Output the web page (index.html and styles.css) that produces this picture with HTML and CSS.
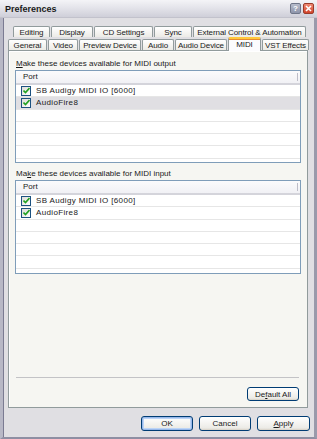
FILE: index.html
```html
<!DOCTYPE html>
<html>
<head>
<meta charset="utf-8">
<link rel="stylesheet" href="styles.css">
</head>
<body>
<div class="window">
  <div class="titlebar">
    <span class="title">Preferences</span>
    <div class="tb-buttons">
      <span class="tb-btn help">?</span>
      <span class="tb-btn close">
        <svg width="7" height="7" viewBox="0 0 7 7"><path d="M1 1L6 6M6 1L1 6" stroke="#fff" stroke-width="1.6"/></svg>
      </span>
    </div>
  </div>
  <div class="frame">
    <div class="tabs">
      <div class="tabrow row1">
        <span class="tab w-editing">Editing</span>
        <span class="tab w-display">Display</span>
        <span class="tab w-cd">CD Settings</span>
        <span class="tab w-sync">Sync</span>
        <span class="tab w-ext">External Control &amp; Automation</span>
      </div>
      <div class="tabrow row2">
        <span class="tab w-general">General</span>
        <span class="tab w-video">Video</span>
        <span class="tab w-preview">Preview Device</span>
        <span class="tab w-audio">Audio</span>
        <span class="tab w-adev">Audio Device</span>
        <span class="tab w-midi active">MIDI</span>
        <span class="tab w-vst">VST Effects</span>
      </div>
    </div>
    <div class="panel">
      <div class="label"><u>M</u>ake these devices available for MIDI output</div>
      <div class="list list-out">
        <div class="lhead"><span>Port</span><i class="hsep"></i></div>
        <div class="row"><span class="cb"><svg width="7" height="7" viewBox="0 0 7 7"><path d="M0.5 3.5L2.5 5.5L6.5 1" fill="none" stroke="#21a121" stroke-width="1.6"/></svg></span><span class="rt">SB Audigy MIDI IO [6000]</span></div>
        <div class="row sel"><span class="cb"><svg width="7" height="7" viewBox="0 0 7 7"><path d="M0.5 3.5L2.5 5.5L6.5 1" fill="none" stroke="#21a121" stroke-width="1.6"/></svg></span><span class="rt">AudioFire8</span></div>
        <div class="row"></div>
        <div class="row"></div>
        <div class="row"></div>
        <div class="row"></div>
      </div>
      <div class="label l2">Ma<u>k</u>e these devices available for MIDI input</div>
      <div class="list list-in">
        <div class="lhead"><span>Port</span><i class="hsep"></i></div>
        <div class="row"><span class="cb"><svg width="7" height="7" viewBox="0 0 7 7"><path d="M0.5 3.5L2.5 5.5L6.5 1" fill="none" stroke="#21a121" stroke-width="1.6"/></svg></span><span class="rt">SB Audigy MIDI IO [6000]</span></div>
        <div class="row"><span class="cb"><svg width="7" height="7" viewBox="0 0 7 7"><path d="M0.5 3.5L2.5 5.5L6.5 1" fill="none" stroke="#21a121" stroke-width="1.6"/></svg></span><span class="rt">AudioFire8</span></div>
        <div class="row"></div>
        <div class="row"></div>
        <div class="row"></div>
        <div class="row"></div>
        <div class="row"></div>
      </div>
      <div class="spacer"></div>
      <div class="sep"></div>
      <div class="defrow"><span class="btn w-def">De<u>f</u>ault All</span></div>
    </div>
    <div class="buttons">
      <span class="btn default w-ok">OK</span>
      <span class="btn w-cancel">Cancel</span>
      <span class="btn w-apply"><u>A</u>pply</span>
    </div>
  </div>
</div>
</body>
</html>
```
FILE: styles.css
```css
html, body {
  margin: 0;
  padding: 0;
  background: #e0dfe3;
}
body {
  font-family: "Liberation Sans", Arial, sans-serif;
  font-size: 8px;
  color: #1a1a1a;
}
.window {
  width: 317px;
  height: 439px;
  display: flex;
  flex-direction: column;
  box-sizing: border-box;
}
.titlebar {
  height: 18px;
  flex: none;
  display: flex;
  align-items: center;
  justify-content: space-between;
  padding: 0 3px 0 5px;
  background: linear-gradient(#f4f4f7 0%, #e6e6ec 40%, #cfcfd9 100%);
  border-bottom: 1px solid #c2c2cc;
  box-sizing: border-box;
}
.title {
  font-weight: bold;
  font-size: 9px;
  color: #1a1a1a;
}
.tb-buttons {
  display: flex;
  gap: 2px;
}
.tb-btn {
  width: 11px;
  height: 11px;
  border-radius: 2px;
  box-sizing: border-box;
  display: flex;
  align-items: center;
  justify-content: center;
  font-weight: bold;
  font-size: 8px;
  color: #fff;
}
.help {
  background: linear-gradient(#b7bccb, #8e95ab);
  border: 1px solid #6f7689;
}
.close {
  background: linear-gradient(#f08a73, #d1432b);
  border: 1px solid #9b3b2a;
}
.frame {
  flex: 1;
  display: flex;
  flex-direction: column;
  border-left: 3px solid #b8b8c6;
  border-right: 3px solid #9a9aab;
  border-bottom: 2px solid #8f8fa3;
  box-shadow: inset 1px 0 0 #7b7b92;
  padding: 7px 4px 0 5px;
  background: #e0dfe3;
}
.tabs {
  display: flex;
  flex-direction: column;
  height: 25px;
  flex: none;
}
.tabrow {
  display: flex;
  align-items: flex-end;
  height: 12px;
}
.row1 { padding-left: 5px; height: 12px; }
.row2 { height: 13px; }
.tab {
  height: 11px;
  box-sizing: border-box;
  border: 1px solid #919b9c;
  border-bottom: none;
  border-radius: 2px 2px 0 0;
  background: linear-gradient(#ffffff, #ecebe6);
  display: flex;
  align-items: center;
  justify-content: center;
  margin-right: 1px;
  white-space: nowrap;
  font-size: 8px;
  letter-spacing: -0.1px;
}
.tab.active {
  height: 14px;
  background: #fcfcfe;
  border-top: 2px solid #ffc83c;
  box-shadow: inset 0 1px 0 #e68b2c;
  align-items: flex-start;
  padding-top: 1px;
  position: relative;
  z-index: 2;
  margin-bottom: -1px;
}
.w-editing { width: 37px; }
.w-display { width: 42px; }
.w-cd { width: 59px; }
.w-sync { width: 38px; }
.w-ext { width: 113px; }
.w-general { width: 39px; }
.w-video { width: 30px; }
.w-preview { width: 62px; }
.w-audio { width: 32px; }
.w-adev { width: 52px; }
.w-midi { width: 33px; }
.w-vst { width: 47px; }
.panel {
  height: 358px;
  flex: none;
  box-sizing: border-box;
  border: 1px solid #919b9c;
  background: #f6f6f2;
  box-shadow: inset 1px 1px 0 #fff;
  margin-right: 2px;
  padding: 7px 6px 6px 6px;
  display: flex;
  flex-direction: column;
}
.label {
  height: 12px;
  line-height: 11px;
  padding-left: 1px;
  flex: none;
}
.l2 { margin-top: 5px; }
.list {
  border: 1px solid #7f9db9;
  background: #fff;
  flex: none;
  overflow: hidden;
  box-sizing: border-box;
}
.list-out { height: 93px; }
.list-in { height: 94px; }
.lhead {
  height: 14px;
  background: linear-gradient(#fbfbfc, #f1f1f5);
  border-bottom: 2px solid #d4d4db;
  box-sizing: border-box;
  padding-left: 7px;
  line-height: 12px;
  display: flex;
  justify-content: space-between;
}
.hsep {
  width: 1px;
  margin: 2px 2px 2px 0;
  background: #bdbdc8;
}
.row {
  height: 12.3px;
  box-sizing: border-box;
  border-bottom: 1px solid #e6e6e6;
  display: flex;
  align-items: center;
  padding-left: 5px;
  gap: 5px;
  line-height: 10px;
}
.rt { letter-spacing: 0.35px; }
.row.sel { background: #e0dfe3; }
.cb {
  width: 10px;
  height: 10px;
  box-sizing: border-box;
  border: 1px solid #1c5180;
  background: linear-gradient(135deg, #dcdcd7, #fff);
  display: flex;
  align-items: center;
  justify-content: center;
}
.spacer { flex: 1; }
.sep {
  height: 1px;
  background: #c3c3c6;
  margin: 0 2px 9px 1px;
  flex: none;
}
.defrow {
  display: flex;
  justify-content: flex-end;
  padding-right: 2px;
}
.btn {
  height: 15px;
  box-sizing: border-box;
  border: 1px solid #003c74;
  border-radius: 3px;
  background: linear-gradient(#ffffff, #ecebe6 85%, #d6d0c5);
  display: flex;
  align-items: center;
  justify-content: center;
  font-size: 8px;
}
.btn.default {
  box-shadow: inset 0 0 0 1px #98b8ea, inset 0 0 0 2px #bcd4f6;
}
.w-def { width: 52px; height: 14px; }
.w-ok { width: 52px; }
.w-cancel { width: 52px; }
.w-apply { width: 53px; }
.buttons {
  display: flex;
  justify-content: flex-end;
  gap: 6px;
  margin-top: 8px;
}
```
